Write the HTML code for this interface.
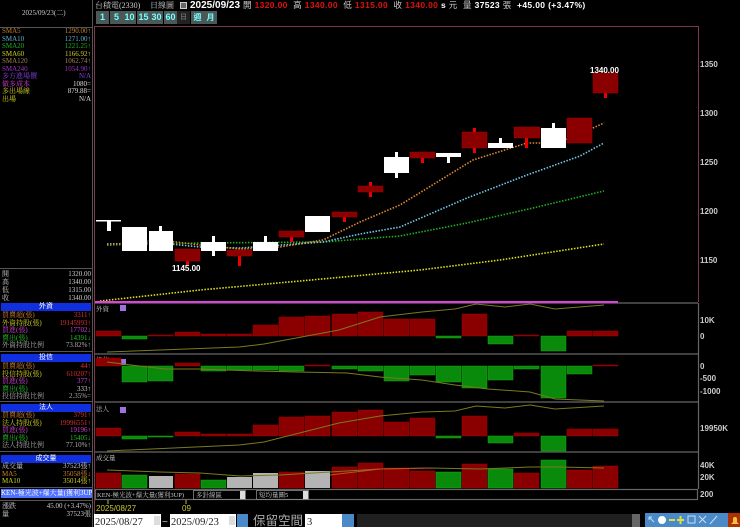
<!DOCTYPE html>
<html><head><meta charset="utf-8"><style>
*{margin:0;padding:0;box-sizing:border-box}
body{width:740px;height:527px;background:#000;position:relative;overflow:hidden;font-family:"Liberation Sans","Noto Sans CJK TC",sans-serif;color:#ddd}
.a{position:absolute;white-space:nowrap}
.s{font-size:7px;line-height:8px;font-family:"Liberation Serif","Noto Serif CJK SC",serif}
.row{position:absolute;left:2px;width:89px;font-size:7px;line-height:8px;font-family:"Liberation Serif","Noto Serif CJK SC",serif}
.row span{position:absolute;right:0}
.hdr{position:absolute;left:1px;width:90px;height:8px;background:#1030e0;color:#fff;font-size:7px;line-height:8px;text-align:center}
.btn{position:absolute;top:11px;height:13px;background:#4a5858;color:#7ff;font-size:9px;line-height:13px;text-align:center;font-weight:bold;width:13px}
</style></head><body>
<!-- left panel -->
<div class="a" style="left:92px;top:0;width:1px;height:527px;background:#555"></div>
<div class="a" style="left:0;top:27px;width:92px;height:1px;background:#555"></div>
<div class="a s" style="left:22px;top:9px;color:#ccc">2025/09/23(二)</div>
<div class="row" style="top:27px;color:#c08030">SMA5<span>1290.00↑</span></div>
<div class="row" style="top:34.5px;color:#60b0d0">SMA10<span>1271.00↑</span></div>
<div class="row" style="top:42px;color:#20b020">SMA20<span>1221.25↑</span></div>
<div class="row" style="top:49.5px;color:#d0d020">SMA60<span>1166.92↑</span></div>
<div class="row" style="top:57px;color:#a08050">SMA120<span>1062.74↑</span></div>
<div class="row" style="top:64.5px;color:#a030c0">SMA240<span>1054.90↑</span></div>
<div class="row" style="top:72px;color:#8040e0">多方進場價<span>N/A</span></div>
<div class="row" style="top:79.5px;color:#d040d0">做多成本<span style="color:#ddd">1080=</span></div>
<div class="row" style="top:87px;color:#d0d020">多出場線<span style="color:#ddd">879.88=</span></div>
<div class="row" style="top:94.5px;color:#d0d020">出場<span style="color:#ddd">N/A</span></div>
<div class="a" style="left:0;top:268px;width:92px;height:1px;background:#555"></div>
<div class="row" style="top:270px;color:#ccc">開<span>1320.00</span></div>
<div class="row" style="top:278px;color:#ccc">高<span>1340.00</span></div>
<div class="row" style="top:286px;color:#ccc">低<span>1315.00</span></div>
<div class="row" style="top:294px;color:#ccc">收<span>1340.00</span></div>
<div class="hdr" style="top:303px">外資</div>
<div class="row" style="top:311px;color:#d08030">買賣超(張)<span style="color:#e03030">3311↑</span></div>
<div class="row" style="top:318.5px;color:#d0d020">外資持股(張)<span style="color:#e03030">19145993↑</span></div>
<div class="row" style="top:326px;color:#d040d0">買進(張)<span style="color:#d040d0">17702↓</span></div>
<div class="row" style="top:333.5px;color:#20c020">賣出(張)<span style="color:#20c020">14391↓</span></div>
<div class="row" style="top:341px;color:#aaa">外資持股比例<span style="color:#aaa">73.82%↑</span></div>
<div class="a" style="left:0;top:351px;width:92px;height:1px;background:#555"></div>
<div class="hdr" style="top:354px">投信</div>
<div class="row" style="top:362px;color:#d08030">買賣超(張)<span style="color:#e03030">44↑</span></div>
<div class="row" style="top:369.5px;color:#d0d020">投信持股(張)<span style="color:#e03030">610207↑</span></div>
<div class="row" style="top:377px;color:#d040d0">買進(張)<span style="color:#d040d0">377↑</span></div>
<div class="row" style="top:384.5px;color:#20c020">賣出(張)<span style="color:#ccc">333↑</span></div>
<div class="row" style="top:392px;color:#aaa">投信持股比例<span style="color:#aaa">2.35%=</span></div>
<div class="a" style="left:0;top:401px;width:92px;height:1px;background:#555"></div>
<div class="hdr" style="top:404px">法人</div>
<div class="row" style="top:411px;color:#d08030">買賣超(張)<span style="color:#e03030">3791↑</span></div>
<div class="row" style="top:418.5px;color:#d0d020">法人持股(張)<span style="color:#e03030">19996551↑</span></div>
<div class="row" style="top:426px;color:#d040d0">買進(張)<span style="color:#d040d0">19196↑</span></div>
<div class="row" style="top:433.5px;color:#20c020">賣出(張)<span style="color:#20c020">15405↓</span></div>
<div class="row" style="top:441px;color:#aaa">法人持股比例<span style="color:#aaa">77.10%↑</span></div>
<div class="a" style="left:0;top:451px;width:92px;height:1px;background:#555"></div>
<div class="hdr" style="top:455px">成交量</div>
<div class="row" style="top:462px;color:#ccc">成交量<span>37523張↑</span></div>
<div class="row" style="top:469.5px;color:#d08030">MA5<span style="color:#d08030">35058張↓</span></div>
<div class="row" style="top:477px;color:#d0d020">MA10<span style="color:#d0d020">35014張↑</span></div>
<div class="a" style="left:0;top:487px;width:92px;height:1px;background:#555"></div>
<div class="a s" style="left:1px;top:489px;width:91px;height:9px;background:#5070ff;color:#fff;overflow:hidden">KEN-極光波+爆大量(獲利3UP)</div>
<div class="a" style="left:0;top:500px;width:92px;height:1px;background:#555"></div>
<div class="row" style="top:502px;color:#ccc">漲跌<span>45.00 (+3.47%)</span></div>
<div class="row" style="top:510px;color:#ccc">量<span>37523張</span></div>

<!-- top bar -->
<div class="a s" style="left:95px;top:2px;font-size:8px;color:#ccc">台積電(2330)</div>
<div class="a s" style="left:150px;top:2px;font-size:8px;color:#ccc">日線圖</div>
<div class="a" style="left:180px;top:2px;width:7px;height:7px;border:1px solid #ccc;background:#666"></div>
<div class="a" style="left:190px;top:0;font-size:10px;line-height:11px;font-weight:bold;color:#fff">2025/09/23</div>
<div class="a" style="left:243px;top:0;font-size:8.5px;font-weight:bold;color:#e01010;line-height:11px;letter-spacing:0.35px"><span style="color:#ccc;font-weight:normal">開</span> 1320.00 &nbsp;<span style="color:#ccc;font-weight:normal">高</span> 1340.00 &nbsp;<span style="color:#ccc;font-weight:normal">低</span> 1315.00 &nbsp;<span style="color:#ccc;font-weight:normal">收</span> 1340.00 <span style="color:#fff">s</span> <span style="color:#ccc;font-weight:normal">元 &nbsp;量</span> <span style="color:#fff">37523</span> <span style="color:#ccc;font-weight:normal">張</span> &nbsp;<span style="color:#fff">+45.00 (+3.47%)</span></div>
<div class="btn" style="left:96px">1</div><div class="btn" style="left:110px">5</div><div class="btn" style="left:123px">10</div><div class="btn" style="left:137px">15</div><div class="btn" style="left:150px">30</div><div class="btn" style="left:164px">60</div><div class="btn" style="left:177px;background:#222;color:#666;font-size:7px">日</div><div class="btn" style="left:191px;font-size:8px">週</div><div class="btn" style="left:204px;font-size:8px">月</div>

<svg class="a" style="left:0;top:0" width="740" height="527" font-family="Liberation Sans" >
<g fill="none" stroke="#7a3a4a" stroke-width="1">
<polyline points="94.5,527 94.5,26.5 698.5,26.5 698.5,302"/>
</g>
<g stroke="#666" stroke-width="1.2" fill="none">
<line x1="95" y1="303" x2="698" y2="303"/>
<line x1="95" y1="354" x2="698" y2="354"/>
<line x1="95" y1="402" x2="698" y2="402"/>
<line x1="95" y1="452" x2="698" y2="452"/>
<line x1="698.5" y1="303" x2="698.5" y2="489"/>
<rect x="95.5" y="489.5" width="602" height="10"/>
</g>
<g fill="#ccc" font-size="8" font-weight="bold">
<text x="700" y="67">1350</text><text x="700" y="116">1300</text><text x="700" y="165">1250</text><text x="700" y="214">1200</text><text x="700" y="263">1150</text>
<text x="700" y="323">10K</text><text x="700" y="339">0</text>
<text x="700" y="369">0</text><text x="700" y="381">-500</text><text x="700" y="394">-1000</text>
<text x="700" y="431">19950K</text>
<text x="700" y="468">40K</text><text x="700" y="480">20K</text><text x="700" y="497">200</text>
</g>
<g fill="none" stroke-width="1.6" stroke-dasharray="1.5 1.5">
<polyline stroke="#e0e020" points="100,301 200,290 300,281 420,270 500,260 604,244"/>
<polyline stroke="#20b020" points="107,245 200,243 323,242 400,236 467,223 533,208 604,191"/>
<polyline stroke="#70c8e8" points="107,244 160,243 200,247 240,248 323,242 360,234 400,227 467,198 527,175 580,156 604,143"/>
<polyline stroke="#e08830" points="107,245 160,240 200,245 240,249 280,247 323,240 360,222 400,205 473,160 527,143 553,143 573,137 604,123"/>
</g>
<g fill="#fff">
<rect x="96" y="220" width="25" height="1.5"/><rect x="107" y="221" width="4" height="10"/>
<rect x="122" y="227" width="25" height="24"/>
<rect x="149" y="231" width="24" height="20"/><rect x="159" y="226" width="3" height="5"/>
<rect x="201" y="242" width="25" height="9"/><rect x="212" y="236" width="3" height="20"/>
<rect x="253" y="242" width="25" height="9"/><rect x="264" y="236" width="3" height="6"/>
<rect x="305" y="216" width="25" height="16"/>
<rect x="384" y="157" width="25" height="16"/><rect x="395" y="152" width="3" height="26"/>
<rect x="436" y="153" width="25" height="4"/><rect x="447" y="153" width="3" height="10"/>
<rect x="488" y="143" width="25" height="5"/><rect x="499" y="138" width="3" height="5"/>
<rect x="541" y="128" width="25" height="20"/><rect x="552" y="123" width="3" height="5"/>
</g>
<g fill="#e00">
<rect x="186" y="261" width="3" height="5"/><rect x="238" y="256" width="3" height="10"/>
<rect x="290" y="237" width="3" height="5"/><rect x="343" y="217" width="3" height="5"/>
<rect x="369" y="182" width="3" height="15"/><rect x="421" y="158" width="3" height="5"/>
<rect x="473" y="128" width="3" height="25"/><rect x="525" y="138" width="3" height="10"/>
<rect x="604" y="93" width="3" height="5"/>
</g>
<g fill="#8a0000" stroke="#a00000" stroke-width="0.5">
<rect x="175" y="249" width="25" height="12"/>
<rect x="227" y="250" width="25" height="6"/>
<rect x="279" y="231" width="25" height="6"/>
<rect x="332" y="212" width="25" height="5"/>
<rect x="358" y="186" width="25" height="6"/>
<rect x="410" y="152" width="25" height="6"/>
<rect x="462" y="132" width="25" height="16"/>
<rect x="514" y="127" width="26" height="11"/>
<rect x="567" y="118" width="25" height="25"/>
<rect x="593" y="73" width="25" height="20"/>
</g>
<g fill="#fff" font-size="8" font-weight="bold"><text x="172" y="271">1145.00</text><text x="590" y="73">1340.00</text></g>
<line x1="95" y1="302" x2="618" y2="302" stroke="#e040e0" stroke-width="2"/>
<rect x="120" y="305" width="6" height="6" fill="#a070e0"/><rect x="120" y="359" width="6" height="6" fill="#a070e0"/><rect x="120" y="407" width="6" height="6" fill="#a070e0"/>
<g fill="#ccc" font-size="6.5" font-family="Liberation Serif,Noto Serif CJK SC,serif"><text x="96" y="311">外資</text><text x="96" y="362">投信</text><text x="96" y="411">法人</text><text x="96" y="460">成交量</text></g>
<g fill="#8a0000" stroke="#a00000" stroke-width="0.5">
<rect x="96" y="331" width="25" height="5"/><rect x="148" y="335" width="25" height="1"/><rect x="175" y="332" width="25" height="4"/><rect x="201" y="334" width="25" height="2"/><rect x="227" y="334" width="25" height="2"/><rect x="253" y="325" width="25" height="11"/><rect x="279" y="317" width="25" height="19"/><rect x="305" y="316" width="25" height="20"/><rect x="332" y="314" width="25" height="22"/><rect x="358" y="312" width="25" height="24"/><rect x="384" y="319" width="25" height="17"/><rect x="410" y="319" width="25" height="17"/><rect x="462" y="314" width="25" height="22"/><rect x="514" y="335" width="25" height="1"/><rect x="567" y="331" width="25" height="5"/><rect x="593" y="331" width="25" height="5"/>
</g>
<g fill="#0a8a0a" stroke="#1a1" stroke-width="0.5">
<rect x="122" y="336" width="25" height="3"/><rect x="436" y="336" width="25" height="2"/><rect x="488" y="336" width="25" height="8"/><rect x="541" y="336" width="25" height="15"/>
</g>
<polyline fill="none" stroke="#7a7a20" stroke-width="1" points="107,352 239,347 264,344 339,330 380,317 422,312 455,309 476,304 505,307 530,304 555,309 604,305"/>
<g fill="#8a0000" stroke="#a00000" stroke-width="0.5">
<rect x="96" y="358" width="25" height="8"/><rect x="175" y="363" width="25" height="3"/><rect x="305" y="365" width="25" height="1"/><rect x="593" y="365" width="25" height="1"/>
</g>
<g fill="#0a8a0a" stroke="#1a1" stroke-width="0.5">
<rect x="122" y="366" width="25" height="16"/><rect x="148" y="366" width="25" height="15"/><rect x="201" y="366" width="25" height="5"/><rect x="227" y="366" width="25" height="4"/><rect x="253" y="366" width="25" height="4"/><rect x="279" y="366" width="25" height="5"/><rect x="332" y="366" width="25" height="3"/><rect x="358" y="366" width="25" height="5"/><rect x="384" y="366" width="25" height="15"/><rect x="410" y="366" width="25" height="9"/><rect x="436" y="366" width="25" height="16"/><rect x="462" y="366" width="25" height="22"/><rect x="488" y="366" width="25" height="14"/><rect x="514" y="366" width="25" height="3"/><rect x="541" y="366" width="25" height="32"/><rect x="567" y="366" width="25" height="8"/>
</g>
<polyline fill="none" stroke="#7a7a20" stroke-width="1" points="107,362 131,365 165,369 198,369 256,371 297,372 347,373 380,377 422,380 455,385 488,389 530,392 555,399 604,401"/>
<g fill="#8a0000" stroke="#a00000" stroke-width="0.5">
<rect x="96" y="428" width="25" height="8"/><rect x="175" y="432" width="25" height="4"/><rect x="201" y="434" width="25" height="2"/><rect x="227" y="434" width="25" height="2"/><rect x="253" y="425" width="25" height="11"/><rect x="279" y="417" width="25" height="19"/><rect x="305" y="416" width="25" height="20"/><rect x="332" y="412" width="25" height="24"/><rect x="358" y="410" width="25" height="26"/><rect x="384" y="422" width="25" height="14"/><rect x="410" y="418" width="25" height="18"/><rect x="462" y="416" width="25" height="20"/><rect x="514" y="433" width="25" height="3"/><rect x="567" y="429" width="25" height="7"/><rect x="593" y="429" width="25" height="7"/>
</g>
<g fill="#0a8a0a" stroke="#1a1" stroke-width="0.5">
<rect x="122" y="436" width="25" height="3"/><rect x="148" y="436" width="25" height="1"/><rect x="436" y="436" width="25" height="2"/><rect x="488" y="436" width="25" height="7"/><rect x="541" y="436" width="25" height="15"/>
</g>
<polyline fill="none" stroke="#7a7a20" stroke-width="1" points="107,451 239,445 264,442 339,423 380,416 422,412 455,411 476,406 505,408 530,405 555,409 604,406"/>
<g fill="#8a0000" stroke="#a00000" stroke-width="0.5">
<rect x="96" y="473" width="25" height="15"/><rect x="175" y="474" width="25" height="14"/><rect x="279" y="472" width="25" height="16"/><rect x="332" y="467" width="25" height="21"/><rect x="358" y="463" width="25" height="25"/><rect x="384" y="468" width="25" height="20"/><rect x="410" y="471" width="25" height="17"/><rect x="462" y="464" width="25" height="24"/><rect x="514" y="473" width="25" height="15"/><rect x="567" y="470" width="25" height="18"/><rect x="593" y="466" width="25" height="22"/>
</g>
<g fill="#0a8a0a" stroke="#1a1" stroke-width="0.5">
<rect x="122" y="475" width="25" height="13"/><rect x="201" y="480" width="25" height="8"/><rect x="436" y="472" width="25" height="16"/><rect x="488" y="469" width="25" height="19"/><rect x="541" y="460" width="25" height="28"/>
</g>
<g fill="#b4b4b4"><rect x="149" y="476" width="24" height="12"/><rect x="227" y="477" width="25" height="11"/><rect x="253" y="473" width="25" height="15"/><rect x="305" y="471" width="25" height="17"/></g>
<polyline fill="none" stroke="#7a7a20" stroke-width="1" points="107,470 160,472 200,473 240,476 280,475 330,472 380,469 430,468 480,469 530,467 560,467 604,468"/>
<polyline fill="none" stroke="#c05020" stroke-width="1" points="330,475 380,469 430,468"/>
<g fill="#ccc" font-size="6.5" font-family="Liberation Serif,Noto Serif CJK SC,serif">
<text x="97" y="497">KEN-極光波+爆大量(獲利3UP)</text>
</g>
<g fill="none" stroke="#888" stroke-width="0.8"><rect x="193.5" y="490.5" width="52" height="9"/><rect x="256.5" y="490.5" width="52" height="9"/></g>
<rect x="240" y="491" width="5" height="8" fill="#ddd"/><rect x="303" y="491" width="5" height="8" fill="#ddd"/>
<g fill="#ccc" font-size="6.5" font-family="Liberation Serif,Noto Serif CJK SC,serif"><text x="196" y="497">多針線區</text><text x="259" y="497">短均量圖5</text></g>
<line x1="108" y1="500" x2="108" y2="504" stroke="#bb3"/><line x1="186" y1="500" x2="186" y2="504" stroke="#bb3"/>
<g fill="#c8c830" font-size="8"><text x="96" y="511">2025/08/27</text><text x="182" y="511">09</text></g>
<rect x="94" y="514" width="67" height="13" fill="#fff"/><rect x="154" y="516" width="6" height="9" fill="#ddd"/>
<rect x="170" y="514" width="66" height="13" fill="#fff"/><rect x="229" y="516" width="6" height="9" fill="#ddd"/>
<rect x="237" y="514" width="11" height="13" fill="#4a8ac8"/><rect x="342" y="514" width="12" height="13" fill="#4a8ac8"/>
<rect x="305" y="514" width="37" height="13" fill="#fff"/>
<g font-size="10.5" fill="#222" font-family="Liberation Serif,serif"><text x="95" y="525">2025/08/27</text><text x="171" y="525">2025/09/23</text><text x="307" y="525">3</text></g>
<text x="162" y="525" fill="#ccc" font-size="10">~</text>
<text x="253" y="525" fill="#aaa" font-size="12.5" font-family="Noto Sans CJK TC,sans-serif">保留空間</text>
<rect x="357" y="514" width="283" height="13" fill="#202020"/><rect x="632" y="514" width="8" height="13" fill="#666"/>
<rect x="645" y="513" width="95" height="14" fill="#4a8ac8"/><rect x="728" y="513" width="12" height="14" fill="#b03000"/>
<g fill="#e0e040"><rect x="669" y="519" width="6" height="2"/><rect x="677" y="519" width="7" height="2"/><rect x="679.5" y="516" width="2" height="8"/></g>
<g stroke="#cde" stroke-width="1" fill="none"><path d="M649 517l5 5M649 517h3M649 517v3"/><rect x="688" y="516" width="7" height="7"/><path d="M699 516l7 7M706 516l-7 7"/><path d="M710 524l7-8"/></g>
<circle cx="662" cy="520" r="4" fill="#fff"/><path d="M731 524h8l-2-2v-3a2 2 0 0 0-4 0v3z" fill="#f0c040"/>
</svg>
</body></html>
